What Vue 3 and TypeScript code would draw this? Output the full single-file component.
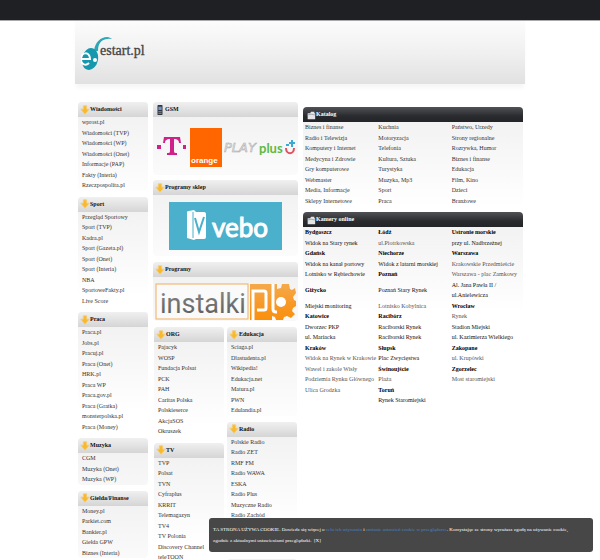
<script setup lang="ts">
interface Block {
  title: string
  items: string[]
  long?: boolean
}

interface Place {
  text: string
  kind?: 'city' | 'soft'
}

const left: Block[] = [
  { title: 'Wiadomości', items: ['wprost.pl', 'Wiadomości (TVP)', 'Wiadomości (WP)', 'Wiadomości (Onet)', 'Informacje (PAP)', 'Fakty (Interia)', 'Rzeczpospolita.pl'] },
  { title: 'Sport', items: ['Przegląd Sportowy', 'Sport (TVP)', 'Kadra.pl', 'Sport (Gazeta.pl)', 'Sport (Onet)', 'Sport (Interia)', 'NBA', 'SportoweFakty.pl', 'Live Score'] },
  { title: 'Praca', items: ['Praca.pl', 'Jobs.pl', 'Pracuj.pl', 'Praca (Onet)', 'HRK.pl', 'Praca WP', 'Praca.gov.pl', 'Praca (Gratka)', 'monsterpolska.pl', 'Praca (Money)'] },
  { title: 'Muzyka', items: ['CGM', 'Muzyka (Onet)', 'Muzyka (WP)'] },
  { title: 'Giełda/Finanse', items: ['Money.pl', 'Parkiet.com', 'Bankier.pl', 'Giełda GPW', 'Biznes (Interia)'] },
]

const inner: Block[][] = [
  [
    { title: 'ORG', items: ['Pajacyk', 'WOSP', 'Fundacja Polsat', 'PCK', 'PAH', 'Caritas Polska', 'Polskieserce', 'AkcjaSOS', 'Okruszek'] },
    { title: 'TV', items: ['TVP', 'Polsat', 'TVN', 'Cyfraplus', 'KRRIT', 'Telemagazyn', 'TV4', 'TV Polonia', 'Discovery Channel', 'teleTOON'] },
  ],
  [
    { title: 'Edukacja', items: ['Sciaga.pl', 'Dlastudenta.pl', 'Wikipedia!', 'Edukacja.net', 'Matura.pl', 'PWN', 'Edulandia.pl'] },
    { title: 'Radio', items: ['Polskie Radio', 'Radio ZET', 'RMF FM', 'Radio WAWA', 'ESKA', 'Radio Plus', 'Muzyczne Radio', 'Radio Zachód'], long: true },
    { title: '', items: [] },
  ],
]

const catalog: string[][] = [
  ['Biznes i finanse', 'Kuchnia', 'Państwo, Urzedy'],
  ['Radio i Telewizja', 'Motoryzacja', 'Strony regionalne'],
  ['Komputery i Internet', 'Telefonia', 'Rozrywka, Humor'],
  ['Medycyna i Zdrowie', 'Kultura, Sztuka', 'Biznes i finanse'],
  ['Gry komputerowe', 'Turystyka', 'Edukacja'],
  ['Webmaster', 'Muzyka, Mp3', 'Film, Kino'],
  ['Media, Informacje', 'Sport', 'Dzieci'],
  ['Sklepy Internetowe', 'Praca', 'Branżowe'],
]

const city = (text: string): Place => ({ text, kind: 'city' })
const soft = (text: string): Place => ({ text, kind: 'soft' })
const spot = (text: string): Place => ({ text })

const cameras: Place[][] = [
  [city('Bydgoszcz'), city('Łódź'), city('Ustronie morskie')],
  [spot('Widok na Stary rynek'), soft('ul.Piotrkowska'), spot('przy ul. Nadbrzeżnej')],
  [city('Gdańsk'), city('Niechorze'), city('Warszawa')],
  [spot('Widok na kanał portowy'), spot('Widok z latarni morskiej'), soft('Krakowskie Przedmieście')],
  [spot('Lotnisko w Rębiechowie'), city('Poznań'), soft('Warszawa - plac Zamkowy')],
  [city('Giżycko'), spot('Poznań Stary Rynek'), spot('Al. Jana Pawła II /\nul.Anielewicza')],
  [spot('Miejski monitoring'), soft('Lotnisko Kobylnica'), city('Wrocław')],
  [city('Katowice'), city('Racibórz'), soft('Rynek')],
  [spot('Dworzec PKP'), spot('Raciborski Rynek'), spot('Stadion Miejski')],
  [spot('ul. Mariacka'), spot('Raciborski Rynek'), spot('ul. Kazimierza Wielkiego')],
  [city('Kraków'), city('Słupsk'), city('Zakopane')],
  [soft('Widok na Rynek w Krakowie'), spot('Plac Zwycięstwa'), soft('ul. Krupówki')],
  [soft('Wawel i zakole Wisły'), city('Świnoujście'), city('Zgorzelec')],
  [soft('Podziemia Rynku Głównego'), soft('Plaża'), soft('Most staromiejski')],
  [soft('Ulica Grodzka'), city('Toruń'), spot('')],
  [spot(''), spot('Rynek Staromiejski'), spot('')],
]

const arrow = 'M4 1h4v4h3L6 11 1 5h3z'
</script>

<template>
  <div class="page">
    <div class="topbar"></div>
    <div class="site">
      <header class="masthead">
        <a href="#" class="brand" aria-label="estart.pl">
          <svg width="74" height="38" viewBox="0 0 74 38">
            <path d="M13 15C14 6 20 1 26 1c2 0 4 1 5 2-8-1-14 2-14 12z" fill="#2ba7b8" />
            <ellipse cx="9" cy="23" rx="8" ry="11" transform="rotate(12 9 23)" fill="#1597ae" />
            <path d="M0 23h9c0-8-9-7-9 0 0 6 5 7 8 4" fill="none" stroke="#fff" stroke-width="2" />
            <circle cx="14" cy="24" r="2" fill="#fff" />
            <text x="19" y="19" class="brand-text">estart.pl</text>
          </svg>
        </a>
      </header>

      <main class="columns">
        <div>
          <section v-for="b in left" :key="b.title" class="block">
            <h2 class="head">
              <svg class="icon" viewBox="0 0 12 12"><path :d="arrow" fill="#f8b92c" stroke="#f3cd75" /></svg>{{ b.title }}
            </h2>
            <ul class="links">
              <li v-for="i in b.items" :key="i"><a href="#">{{ i }}</a></li>
            </ul>
          </section>
        </div>

        <div>
          <section class="block gsm">
            <h2 class="head">
              <svg class="icon" viewBox="0 0 12 12">
                <rect x="3" y="0" width="6" height="12" rx="1" fill="#30343c" />
                <rect x="4" y="2" width="4" height="4" fill="#6d93d0" />
                <path d="M4 8h4M4 10h4" stroke="#9aa0a8" />
              </svg>GSM
            </h2>
            <div class="banner">
              <svg width="141" height="58" viewBox="0 -5 141 58">
                <g fill="#d0208a">
                  <path d="M9 15h16l1 6h-2c0-3-2-4-5-4v12c0 2 1 2 3 2v2H12v-2c2 0 3 0 3-2V17c-3 0-5 1-5 4H8z" />
                  <path d="M2 23h4v4H2zM28 23h3v4h-3z" />
                </g>
                <rect x="35" y="6" width="32" height="39" fill="#ff6600" />
                <text x="36" y="41" class="orange">orange</text>
                <text x="69" y="30" class="play">PLAY</text>
                <text x="104" y="31" class="plus">plus</text>
                <path d="M131 26c0 7 8 7 8 0" fill="none" stroke="#e15261" stroke-width="2" />
                <path d="M131 23h3M137 18v7M134 21h6" fill="none" stroke="#3ba9d2" stroke-width="2" />
              </svg>
            </div>
          </section>
          <section class="block shop">
            <h2 class="head">
              <svg class="icon" viewBox="0 0 12 12"><path :d="arrow" fill="#f8b92c" stroke="#f3cd75" /></svg>Programy sklep
            </h2>
            <div class="banner">
              <svg width="113" height="48" viewBox="0 0 113 48">
                <rect width="113" height="48" fill="#4bb0cb" />
                <path d="M18 10q0-1 2-1l5-1 2 2h8q2 0 2 2v23q0 2-2 2h-8l-2 1-7-2z" fill="#fff" />
                <path d="M24 10v26" stroke="#4bb0cb" />
                <path d="M26 16l4 14 5-15" fill="none" stroke="#4bb0cb" stroke-width="2" />
                <text x="43" y="35" class="vebo">vebo</text>
              </svg>
            </div>
          </section>
          <section class="block programs">
            <h2 class="head">
              <svg class="icon" viewBox="0 0 12 12"><path :d="arrow" fill="#f8b92c" stroke="#f3cd75" /></svg>Programy
            </h2>
            <div class="banner">
              <svg width="141" height="37" viewBox="0 0 141 37">
                <defs>
                  <linearGradient id="amber" x1="0" y1="0" x2="0" y2="1">
                    <stop offset="0" stop-color="#f5a94b" />
                    <stop offset="0.5" stop-color="#f79a2b" />
                    <stop offset="1" stop-color="#fb8f0a" />
                  </linearGradient>
                  <linearGradient id="steel" x1="0" y1="0" x2="0" y2="1">
                    <stop offset="0" stop-color="#8a8a8a" />
                    <stop offset="1" stop-color="#575757" />
                  </linearGradient>
                </defs>
                <rect x="1" y="1" width="92" height="35" fill="#fafafa" stroke="#f0ae5c" />
                <text x="5" y="30" class="instalki">instalki</text>
                <path d="M95 1h27v5l4-1 1-4h7l1 5 2 1 3-2 1 5-3 4 1 3 2 1v5l-3 2-1 3 3 3-4 4-4-2-3 1-1 3h-7l-1-3-3-1v4H95z" fill="url(#amber)" />
                <circle cx="126" cy="19" r="5" fill="#fff" />
                <path d="M98 37V8h11q2 0 2 2v15q0 2-2 2h-7M118 1v25q0 3 3 3h1" class="pl-mark" />
              </svg>
            </div>
          </section>

          <div class="pair">
            <div v-for="(col, n) in inner" :key="n">
              <section v-for="b in col" :key="b.title" class="block">
                <h2 class="head">
                  <svg v-if="b.title" class="icon" viewBox="0 0 12 12"><path :d="arrow" fill="#f8b92c" stroke="#f3cd75" /></svg>{{ b.title }}
                </h2>
                <ul class="links" :class="{ long: b.long }">
                  <li v-for="i in b.items" :key="i"><a href="#">{{ i }}</a></li>
                </ul>
              </section>
            </div>
          </div>
        </div>

        <div class="wide">
          <section class="block">
            <h2 class="head dark">
              <svg class="icon" viewBox="0 0 12 12"><path d="M2 4h3l1-2h4v2l1 0v7H2z" fill="#e4e5e6" /><path d="M2 6l4-1 5 1" fill="none" stroke="#9b9ea1" /></svg>Katalog
            </h2>
            <table class="grid">
              <tbody>
                <tr v-for="(r, n) in catalog" :key="n">
                  <td v-for="(c, m) in r" :key="m"><a href="#">{{ c }}</a></td>
                </tr>
              </tbody>
            </table>
          </section>
          <section class="block">
            <h2 class="head dark">
              <svg class="icon" viewBox="0 0 12 12"><path d="M2 4h3l1-2h4v2l1 0v7H2z" fill="#e4e5e6" /><path d="M2 6l4-1 5 1" fill="none" stroke="#9b9ea1" /></svg>Kamery online
            </h2>
            <table class="grid cams">
              <tbody>
                <tr v-for="(r, n) in cameras" :key="n">
                  <td v-for="(c, m) in r" :key="m">
                    <b v-if="c.kind === 'city'">{{ c.text }}</b>
                    <a v-else-if="c.text" href="#" :class="{ soft: c.kind === 'soft' }">{{ c.text }}</a>
                  </td>
                </tr>
              </tbody>
            </table>
          </section>
        </div>
      </main>
    </div>

    <aside class="cookie">
      TA STRONA UŻYWA COOKIE. Dowiedz się więcej o <a href="#">celu ich używania</a> i
      <a href="#">zmianie ustawień cookie w przeglądarce</a>. Korzystając ze strony wyrażasz zgodę na używanie cookie,<br>
      zgodnie z aktualnymi ustawieniami przeglądarki. &nbsp;<button type="button">[X]</button>
    </aside>
  </div>
</template>

<style>
body {
  background: #fff;
}
</style>

<style scoped>
.page {
  font: 6px/1.75 "Liberation Serif", serif;
  color: #222;
}
.topbar {
  height: 20px;
  background: #1f2023;
  border-bottom: 1px solid #aaa;
}
.site {
  width: 75%;
  margin: 0 auto;
}
.masthead {
  height: 63px;
  box-sizing: border-box;
  padding: 15px 6px 0;
  background: linear-gradient(#fcfcfc, #f0f0f0 50%, #e1e1e1);
  box-shadow: 0 5px 4px -1px #f6f6f6;
}
.brand {
  display: inline-block;
}
.brand svg {
  display: block;
}
.brand-text {
  font: 14px "Liberation Serif", serif;
  fill: #444;
  stroke: #444;
  stroke-width: 0.3;
}
.columns {
  display: grid;
  grid-template-columns: 70fr 145fr 220fr;
  gap: 5px;
  padding: 18px 2px 0 3px;
}
.block {
  margin-bottom: 6px;
  background: linear-gradient(#f0f0f0, #fff 100px);
  border-radius: 4px;
}
.head {
  display: flex;
  align-items: center;
  height: 15px;
  margin: 0;
  padding: 0 2px;
  font-size: 6px;
  line-height: 15px;
  color: #111;
  background: linear-gradient(#f0f0f0, #d5d5d5);
  border-radius: 4px 4px 0 0;
}
.icon {
  width: 10px;
  height: 10px;
}
.links {
  margin: 0;
  padding: 0 4px;
  list-style: none;
  white-space: nowrap;
}
.long {
  padding-bottom: 32px;
}
a {
  color: #333;
  text-decoration: none;
}
.banner {
  display: flex;
  justify-content: center;
}
.gsm .banner,
.shop .banner {
  align-items: center;
}
.gsm {
  margin-bottom: 5px;
}
.gsm .banner {
  height: 58px;
}
.shop .banner {
  height: 61px;
}
.programs .banner {
  padding: 6px 0 1px;
}
.orange {
  font: bold 8px "Liberation Sans", sans-serif;
  fill: #fff;
}
.play {
  font: italic 13px "DejaVu Sans", sans-serif;
  fill: #e4e4e4;
  stroke: #aaa;
  stroke-width: 0.5;
}
.plus {
  font: bold 13px Lato, sans-serif;
  fill: #5cb947;
}
.vebo {
  font: 26px Lato, sans-serif;
  fill: #fff;
  stroke: #fff;
}
.instalki {
  font: 27px Roboto, sans-serif;
  fill: url(#steel);
}
.pl-mark {
  fill: none;
  stroke: #fff;
  stroke-width: 3;
}
.pair {
  display: grid;
  grid-template-columns: 1fr 1fr;
  gap: 3px;
  padding: 0 1px;
}
.wide {
  padding-top: 5px;
}
.dark {
  padding: 0 3px;
  color: #fff;
  background: linear-gradient(#505255, #292b2e 60%, #222427);
}
.grid {
  width: 100%;
  table-layout: fixed;
  border-collapse: collapse;
}
.grid td {
  padding: 0 0 0 2px;
  height: 1.75em;
  vertical-align: middle;
  white-space: pre-line;
}
.cams a {
  color: #111;
}
.cams a.soft {
  color: #555;
}
b {
  color: #000;
}
.cookie {
  position: fixed;
  right: 7px;
  bottom: 8px;
  box-sizing: border-box;
  width: 64%;
  padding: 6px 4px;
  font-size: 5px;
  line-height: 11px;
  color: #fff;
  background: #474747;
  border-radius: 3px;
}
.cookie a {
  color: #4684c4;
}
.cookie button {
  padding: 0;
  font: inherit;
  color: inherit;
  background: none;
  border: 0;
}
</style>
